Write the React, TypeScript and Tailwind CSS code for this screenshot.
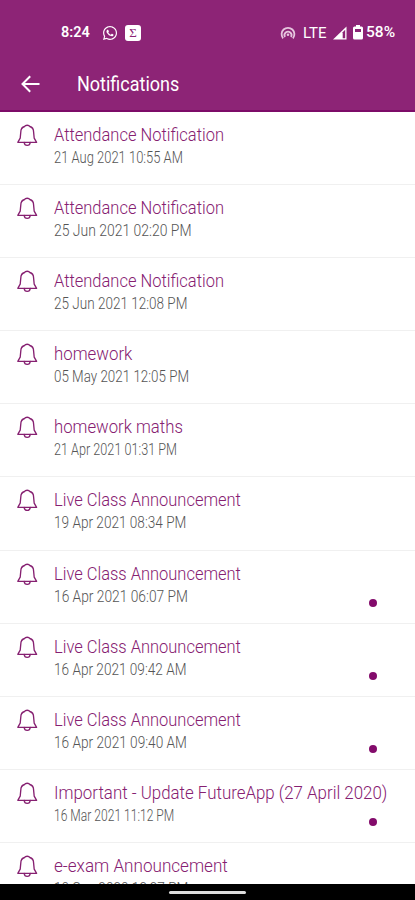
import { FaWhatsapp } from "react-icons/fa"

type NotificationItem = {
  title: string
  date: string
  titleScale: string
  dateScale: string
  unread?: boolean
}

const notifications: NotificationItem[] = [
  { title: "Attendance Notification", date: "21 Aug 2021 10:55 AM", titleScale: "scale-x-[0.916]", dateScale: "scale-x-[0.81]" },
  { title: "Attendance Notification", date: "25 Jun 2021 02:20 PM", titleScale: "scale-x-[0.916]", dateScale: "scale-x-[0.871]" },
  { title: "Attendance Notification", date: "25 Jun 2021 12:08 PM", titleScale: "scale-x-[0.916]", dateScale: "scale-x-[0.845]" },
  { title: "homework", date: "05 May 2021 12:05 PM", titleScale: "scale-x-[0.935]", dateScale: "scale-x-[0.837]" },
  { title: "homework maths", date: "21 Apr 2021 01:31 PM", titleScale: "scale-x-[0.93]", dateScale: "scale-x-[0.79]" },
  { title: "Live Class Announcement", date: "19 Apr 2021 08:34 PM", titleScale: "scale-x-[0.915]", dateScale: "scale-x-[0.85]" },
  { title: "Live Class Announcement", date: "16 Apr 2021 06:07 PM", titleScale: "scale-x-[0.915]", dateScale: "scale-x-[0.86]", unread: true },
  { title: "Live Class Announcement", date: "16 Apr 2021 09:42 AM", titleScale: "scale-x-[0.915]", dateScale: "scale-x-[0.85]", unread: true },
  { title: "Live Class Announcement", date: "16 Apr 2021 09:40 AM", titleScale: "scale-x-[0.915]", dateScale: "scale-x-[0.853]", unread: true },
  { title: "Important - Update FutureApp (27 April 2020)", date: "16 Mar 2021 11:12 PM", titleScale: "scale-x-[0.938]", dateScale: "scale-x-[0.755]", unread: true },
  { title: "e-exam Announcement", date: "10 Sep 2020 12:27 PM", titleScale: "scale-x-[0.95]", dateScale: "scale-x-[0.85]" },
]

function BellIcon() {
  return (
    <svg className="mt-3 ml-[17px] h-[23px] w-[21px] shrink-0" viewBox="0 0 21 23" fill="none" stroke="#862071" strokeWidth="1.35" strokeLinejoin="round" strokeLinecap="round">
      <path d="M7.6 2.5C8.4.8 12 .8 12.8 2.5C15.4 3.2 16.6 5.2 16.6 8L17.2 14.2L19.6 18.3H.8L3.2 14.2L3.8 8C3.8 5.2 5 3.2 7.6 2.5Z" />
      <path d="M7.2 18.5C7.5 22.4 12.9 22.4 13.2 18.5" />
    </svg>
  )
}

function StatusBar() {
  return (
    <div className="flex h-[57px] items-center pt-2 text-white">
      <span className="ml-[61px] w-[41px] text-[14.5px] font-semibold leading-5">
        8:24
      </span>
      <FaWhatsapp className="size-4" />
      <span className="ml-[7px] flex size-4 items-center justify-center rounded-[3px] bg-white font-['Liberation_Serif',serif] text-[13px] leading-4 text-[#8b2475]">
        Σ
      </span>
      <svg className="ml-[139px] h-[14px] w-4" viewBox="0 0 16 14" fill="none" stroke="#e6c5de" strokeWidth="1.8">
        <path d="M3.1 12.3A6.4 6.4 0 1 1 12.9 12.3" />
        <path d="M5 11A3.5 3.5 0 1 1 11 11" />
        <circle cx="8" cy="8.8" r="1.3" fill="#e6c5de" stroke="none" />
      </svg>
      <span className="ml-[7px] w-[30px] text-[15px] leading-5">
        LTE
      </span>
      <svg className="h-[14px] w-[14px]" viewBox="0 0 14 14">
        <path d="M0 13.5L13.5.5V13.5Z" fill="#fff" />
        <path d="M9.7 6.2L12.2 3.8V12.2H9.7Z" fill="#8b2475" />
      </svg>
      <svg className="ml-[6px] h-[15px] w-[10px]" viewBox="0 0 10 15">
        <path d="M3 0H7V1.5H8.5Q10 1.5 10 3V13Q10 14.5 8.5 14.5H1.5Q0 14.5 0 13V3Q0 1.5 1.5 1.5H3Z" fill="#fff" />
        <path d="M2 4H8V7H2Z" fill="#8b2475" />
      </svg>
      <span className="ml-[3px] origin-left scale-x-[1.07] text-[14.5px] font-medium leading-5">58%</span>
    </div>
  )
}

function Row({ item }: { item: NotificationItem }) {
  return (
    <li className="flex h-[73.1px] shrink-0 border-b border-[#f0f0f0]">
      <BellIcon />
      <div className="ml-4 flex min-w-0 flex-1 flex-col items-start pt-[11px] whitespace-nowrap">
        <span className={`origin-left text-[18px] font-light leading-6 text-[#862071] ${item.titleScale}`}>
          {item.title}
        </span>
        <span className={`origin-left text-[16px] font-light leading-[22px] text-[#555] ${item.dateScale}`}>
          {item.date}
        </span>
      </div>
      {item.unread && <span className="mt-12 mr-[38px] -ml-[46px] size-2 shrink-0 rounded-full bg-[#830b6b]" />}
    </li>
  )
}

export default function App() {
  return (
    <div className="flex h-[900px] w-[415px] flex-col overflow-hidden bg-white font-[Roboto,sans-serif]">
      <header className="h-[112px] shrink-0 border-b-2 border-[#7d0c68] bg-[#8d2476]">
        <StatusBar />
        <div className="flex h-[53px] items-center text-white">
          <svg className="ml-[21px] h-[18px] w-[19px]" viewBox="0 0 19 18" fill="none" stroke="currentColor" strokeWidth="2">
            <path d="M18.5 9H2M9.2 1.2L1.5 9L9.2 16.8" />
          </svg>
          <h1 className="ml-[37px] origin-left scale-x-[0.9] text-[20px] font-normal leading-7">
            Notifications
          </h1>
        </div>
      </header>

      <ul className="flex min-h-0 flex-1 flex-col overflow-hidden">
        {notifications.map((item, i) => (
          <Row key={i} item={item} />
        ))}
      </ul>

      {/* Gesture bar */}
      <div className="flex h-4 shrink-0 justify-center bg-black pt-[7px]">
        <div className="h-[3px] w-[77px] rounded-full bg-[#ddd]" />
      </div>
    </div>
  )
}
